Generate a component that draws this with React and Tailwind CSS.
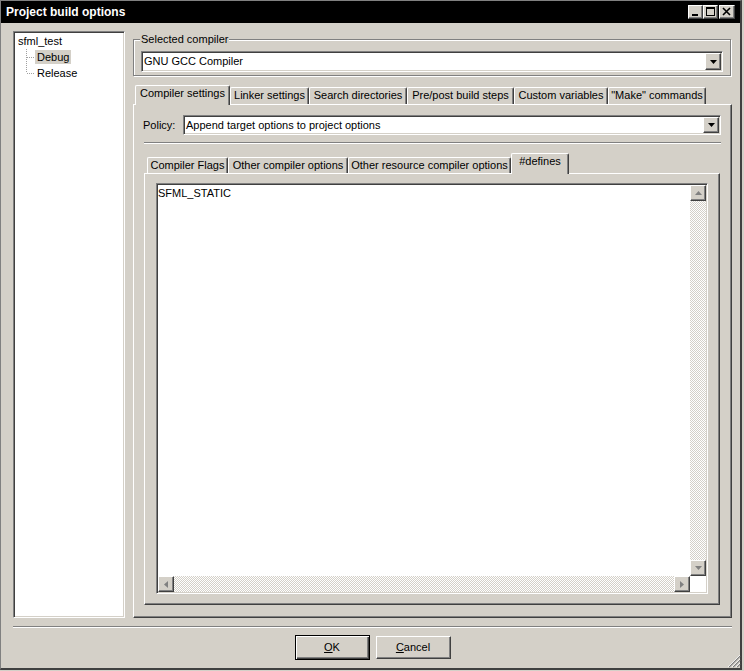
import React from "react";

// classic 3d bevels
const raised =
  "border border-t-white border-l-white border-r-[#404040] border-b-[#404040] shadow-[inset_-1px_-1px_0_#808080]";
const sunken =
  "border border-t-[#808080] border-l-[#808080] border-r-white border-b-white shadow-[inset_1px_1px_0_#404040,inset_-1px_-1px_0_#d4d0c8]";
const checker =
  "bg-[image:repeating-conic-gradient(#d4d0c8_0_25%,#ffffff_0_50%)] bg-[length:2px_2px]";

const outerTabs = [
  { label: "Compiler settings", w: "w-[95px]", active: true },
  { label: "Linker settings", w: "w-[79px]" },
  { label: "Search directories", w: "w-[98px]" },
  { label: "Pre/post build steps", w: "w-[107px]" },
  { label: "Custom variables", w: "w-[94px]" },
  { label: "\"Make\" commands", w: "w-[98px]" },
];

const innerTabs = [
  { label: "Compiler Flags", w: "w-[81px]" },
  { label: "Other compiler options", w: "w-[120px]" },
  { label: "Other resource compiler options", w: "w-[163px]" },
  { label: "#defines", w: "w-[58px]", active: true, tall: true },
];

function Arrow({ dir, color = "#000" }) {
  const pts = {
    down: "0,0 7,0 3.5,4",
    up: "0,4 7,4 3.5,0",
    left: "4,0 4,7 0,3.5",
    right: "0,0 0,7 4,3.5",
  }[dir];
  const vertical = dir === "up" || dir === "down";
  return (
    <svg width={vertical ? 7 : 4} height={vertical ? 4 : 7}>
      <polygon points={pts} fill={color} />
    </svg>
  );
}

function Combo({ value, h }) {
  return (
    <div className={`${sunken} ${h} p-px bg-white flex items-stretch flex-1`}>
      <div className="flex-1 flex items-center pl-px whitespace-nowrap">{value}</div>
      <div className={`${raised} w-[16px] bg-[#d4d0c8] flex items-center justify-center`}>
        <Arrow dir="down" />
      </div>
    </div>
  );
}

function Tab({ tab, innerH, activeH }) {
  return (
    <div
      className={`${tab.w} ${tab.active ? `relative z-10 -mb-px ${activeH}` : innerH} bg-[#d4d0c8] border-t border-l border-white border-r border-r-[#404040] shadow-[inset_-1px_0_0_#808080] rounded-t-[2px] text-center pt-px leading-[13px] whitespace-nowrap`}
    >
      {tab.label}
    </div>
  );
}

function ScrollBtn({ dir }) {
  return (
    <div className={`${raised} w-[16px] h-[16px] bg-[#d4d0c8] flex items-center justify-center shrink-0`}>
      <Arrow dir={dir} color="#808080" />
    </div>
  );
}

function TitleBtn({ children, w }) {
  return (
    <div className={`${raised} ${w} h-[14px] bg-[#d4d0c8] flex items-center justify-center`}>
      {children}
    </div>
  );
}

function TreeLine({ last }) {
  return (
    <svg width="9" height="16" className="shrink-0">
      <line x1="0.5" y1="0" x2="0.5" y2={last ? 8 : 16} stroke="#a0a0a0" strokeDasharray="1 1" />
      <line x1="1" y1="8.5" x2="9" y2="8.5" stroke="#a0a0a0" strokeDasharray="1 1" />
    </svg>
  );
}

export default function App() {
  return (
    <div className="relative w-[744px] h-[671px] bg-[#d4d0c8] overflow-hidden text-[11px] text-black font-[family-name:'Liberation_Sans',Arial,sans-serif]">
      <div className="w-[742px] h-[670px] flex flex-col border-t border-l border-[#808080] border-r-2 border-b-2 border-r-[#404040] border-b-[#404040]">
        {/* Title bar */}
        <div className="h-[22px] bg-black flex items-center pl-[5px] pr-[5px] shrink-0">
          <span className="text-white font-bold text-[12px] flex-1">Project build options</span>
          <TitleBtn w="w-[15px]">
            <svg width="13" height="12">
              <rect x="3" y="8" width="6" height="2" fill="#000" />
            </svg>
          </TitleBtn>
          <TitleBtn w="w-[15px]">
            <svg width="13" height="12">
              <rect x="2.5" y="1.5" width="8" height="8" fill="none" stroke="#000" />
              <rect x="2" y="1" width="9" height="2" fill="#000" />
            </svg>
          </TitleBtn>
          <div className="ml-[1px]">
            <TitleBtn w="w-[16px]">
              <svg width="14" height="12">
                <path d="M3 2 L10 9 M10 2 L3 9" stroke="#000" strokeWidth="1.6" />
              </svg>
            </TitleBtn>
          </div>
        </div>

        {/* Body */}
        <div className="flex gap-[8px] pl-[12px] pr-[8px] pt-[8px] h-[595px] shrink-0">
          {/* Tree */}
          <div className={`${sunken} p-px bg-white w-[112px] h-[587px]`}>
            <div className="h-[16px] flex items-center pl-[3px]">sfml_test</div>
            <div className="h-[16px] flex items-center pl-[11px]">
              <TreeLine />
              <span className="bg-[#d4d0c8] px-[2px] h-[14px] leading-[14px]">Debug</span>
            </div>
            <div className="h-[16px] flex items-center pl-[11px]">
              <TreeLine last />
              <span className="px-[2px] h-[14px] leading-[14px]">Release</span>
            </div>
          </div>

          {/* Right side */}
          <div className="flex-1 flex flex-col h-[587px]">
            <div className="relative mt-[8px] mr-[1px] h-[37px] border border-[#808080] shadow-[inset_1px_1px_0_#fff,1px_1px_0_#fff] pl-[7px] pr-[7px] pt-[11px] flex">
              <span className="absolute left-[6px] -top-[7px] px-px bg-[#d4d0c8] leading-[13px]">
                Selected compiler
              </span>
              <Combo value="GNU GCC Compiler" h="h-[21px]" />
            </div>

            <div className="mt-[9px] flex items-end pl-[2px] h-[19px]">
              {outerTabs.map((t) => (
                <Tab key={t.label} tab={t} innerH="h-[17px]" activeH="h-[20px]" />
              ))}
            </div>

            <div className={`${raised} flex-1 flex flex-col pl-[10px] pr-[10px] pt-[10px] pb-[12px]`}>
              <div className="flex items-center h-[20px]">
                <span className="w-[40px] -ml-px">Policy:</span>
                <Combo value="Append target options to project options" h="h-[20px]" />
              </div>
              <div className="mt-[7px] h-[2px] border-t border-t-[#808080] border-b border-b-white" />

              <div className="mt-[9px] flex items-end pl-[3px] h-[20px]">
                {innerTabs.map((t) => (
                  <Tab key={t.label} tab={t} innerH="h-[16px]" activeH="h-[21px]" />
                ))}
              </div>

              <div className={`${raised} flex-1 mr-px flex flex-col pl-[11px] pr-[11px] pt-[9px] pb-[10px]`}>
                <div className={`${sunken} p-px bg-white flex-1 flex flex-col`}>
                  <div className="flex-1 flex min-h-0">
                    <div className="flex-1 pt-[2px] leading-[13px]">SFML_STATIC</div>
                    <div className="w-[16px] flex flex-col">
                      <ScrollBtn dir="up" />
                      <div className={`flex-1 ${checker}`} />
                      <ScrollBtn dir="down" />
                    </div>
                  </div>
                  <div className="h-[16px] flex">
                    <ScrollBtn dir="left" />
                    <div className={`flex-1 ${checker}`} />
                    <ScrollBtn dir="right" />
                    <div className="w-[16px] bg-white" />
                  </div>
                </div>
              </div>
            </div>
          </div>
        </div>

        {/* Bottom */}
        <div className="mt-[8px] ml-[12px] mr-[8px] h-[2px] border-t border-t-[#808080] border-b border-b-white shrink-0" />
        <div className="mt-[7px] ml-[12px] mr-[8px] flex justify-center items-center gap-[6px]">
          <div className="w-[75px] h-[25px] border border-black bg-[#d4d0c8] shadow-[inset_1px_1px_0_#fff,inset_-1px_-1px_0_#404040,inset_-2px_-2px_0_#808080] flex items-center justify-center">
            <span>
              <span className="underline">O</span>K
            </span>
          </div>
          <div className={`${raised} w-[75px] h-[23px] bg-[#d4d0c8] flex items-center justify-center`}>
            <span>
              <span className="underline">C</span>ancel
            </span>
          </div>
        </div>
      </div>

      {/* size grip */}
      <svg width="13" height="13" className="absolute right-[3px] bottom-[3px]">
        <path d="M12 1 L1 12 M12 5 L5 12 M12 9 L9 12" stroke="#808080" strokeWidth="1.4" />
        <path d="M12 0 L0 12 M12 4 L4 12 M12 8 L8 12" stroke="#ffffff" strokeWidth="0.8" />
      </svg>
    </div>
  );
}
